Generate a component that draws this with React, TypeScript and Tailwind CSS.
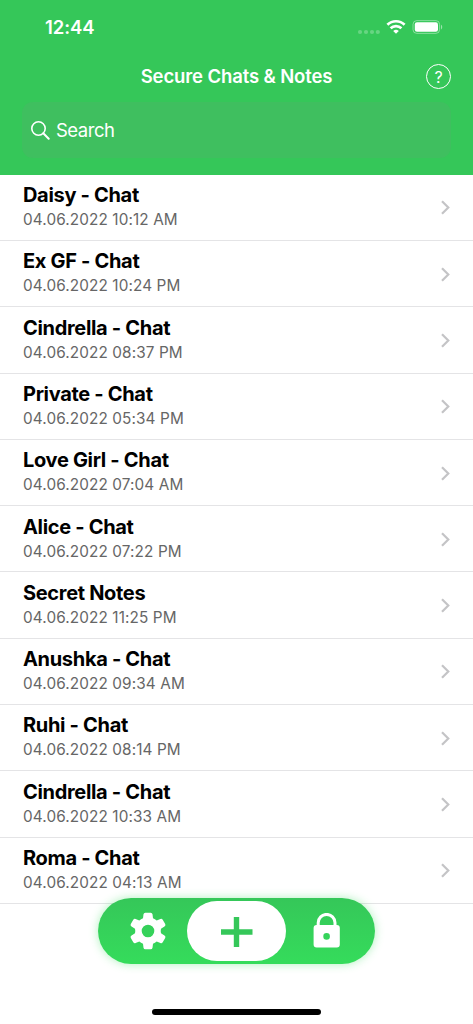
interface ChatEntry {
  title: string
  date: string
}

const chats: ChatEntry[] = [
  { title: "Daisy - Chat", date: "04.06.2022 10:12 AM" },
  { title: "Ex GF - Chat", date: "04.06.2022 10:24 PM" },
  { title: "Cindrella - Chat", date: "04.06.2022 08:37 PM" },
  { title: "Private - Chat", date: "04.06.2022 05:34 PM" },
  { title: "Love Girl - Chat", date: "04.06.2022 07:04 AM" },
  { title: "Alice - Chat", date: "04.06.2022 07:22 PM" },
  { title: "Secret Notes", date: "04.06.2022 11:25 PM" },
  { title: "Anushka - Chat", date: "04.06.2022 09:34 AM" },
  { title: "Ruhi - Chat", date: "04.06.2022 08:14 PM" },
  { title: "Cindrella - Chat", date: "04.06.2022 10:33 AM" },
  { title: "Roma - Chat", date: "04.06.2022 04:13 AM" },
]

function StatusIcons() {
  return (
    <svg width="86" height="16" viewBox="0 0 86 16" fill="none">
      <g fill="#fff" fillOpacity="0.25">
        <circle cx="3" cy="13" r="2.1" />
        <circle cx="9" cy="13" r="2.1" />
        <circle cx="15" cy="13" r="2.1" />
        <circle cx="20.8" cy="13" r="2.1" />
      </g>
      <g stroke="#fff" strokeWidth="2.7">
        <path d="M30.4 5.8a12.2 12.2 0 0 1 17.2 0" />
        <path d="M33.6 9.3a7.8 7.8 0 0 1 10.8 0" />
      </g>
      <path d="M39 14.8l-2.8-2.8a4 4 0 0 1 5.6 0z" fill="#fff" />
      <rect x="56" y="1.6" width="26.6" height="12.8" rx="3.8" stroke="#fff" strokeOpacity="0.4" />
      <rect x="57.8" y="3.2" width="23.2" height="9.6" rx="2.2" fill="#fff" />
      <path d="M84 5.8c1.6.6 1.6 4 0 4.6z" fill="#fff" fillOpacity="0.5" />
    </svg>
  )
}

function GearIcon() {
  return (
    <svg width="36" height="38" viewBox="-18 -19 36 38" fill="#fff">
      <path
        fillRule="evenodd"
        d="M-2.7-18.2H2.7Q4.2-18.2 4.5-16.7L5-12.7Q7-11.9 8.7-10.5L12.4-12Q13.8-12.6 14.7-11.3L17.2-7Q17.9-5.7 16.8-4.8L13-2.3Q12.4 0 13 2.3L16.8 4.8Q17.9 5.7 17.2 7L14.7 11.3Q13.8 12.6 12.4 12L8.7 10.5Q7 11.9 5 12.7L4.5 16.7Q4.2 18.2 2.7 18.2H-2.7Q-4.2 18.2-4.5 16.7L-5 12.7Q-7 11.9-8.7 10.5L-12.4 12Q-13.8 12.6-14.7 11.3L-17.2 7Q-17.9 5.7-16.8 4.8L-13 2.3Q-12.4 0-13-2.3L-16.8-4.8Q-17.9-5.7-17.2-7L-14.7-11.3Q-13.8-12.6-12.4-12L-8.7-10.5Q-7-11.9-5-12.7L-4.5-16.7Q-4.2-18.2-2.7-18.2ZM0-6.3A6.3 6.3 0 1 0 0 6.3A6.3 6.3 0 1 0 0-6.3Z"
      />
    </svg>
  )
}

function LockIcon() {
  return (
    <svg width="28" height="36" viewBox="0 0 28 36" fill="none">
      <path d="M5.2 13V9.8a8.4 8.4 0 0 1 16.8 0V13" stroke="#fff" strokeWidth="3" />
      <path
        fillRule="evenodd"
        fill="#fff"
        d="M3.6 12H23.8Q26.8 12 26.8 15V31.6Q26.8 34.6 23.8 34.6H3.6Q.6 34.6.6 31.6V15Q.6 12 3.6 12ZM13.6 20.1A3.3 3.3 0 1 0 13.6 26.7A3.3 3.3 0 1 0 13.6 20.1Z"
      />
    </svg>
  )
}

function ChatRow({ title, date }: ChatEntry) {
  return (
    <li className="flex h-[66.3px] items-center justify-between border-b border-[#e4e4e6] pr-[22px] pl-[23px]">
      <div className="pt-[1px]">
        <h2 className="text-[20px] leading-[25px] font-[650] tracking-[-0.32px] text-black">{title}</h2>
        <p className="text-[15.3px] leading-[24.5px] tracking-[0.12px] text-[#666]">{date}</p>
      </div>
      <svg width="10" height="16" viewBox="0 0 10 16" fill="none" stroke="#c4c4c6" strokeWidth="2.2">
        <path d="M1 2.2L7.3 8.5L1 14.8" />
      </svg>
    </li>
  )
}

export default function App() {
  return (
    <div className="relative flex h-[1024px] w-[473px] flex-col overflow-hidden bg-white font-['Inter','Liberation_Sans',sans-serif]">
      <header className="h-[174.7px] shrink-0 bg-[#35c759] text-white">
        {/* Status bar */}
        <div className="flex h-[54px] items-center justify-between pr-[30px] pl-[45px]">
          <span className="pt-[1px] text-[18.5px] font-semibold tracking-[-0.1px]">12:44</span>
          <StatusIcons />
        </div>

        {/* Title */}
        <div className="grid h-[48px] grid-cols-[1fr_auto_1fr] items-center px-[22px] pb-[3px]">
          <h1 className="col-start-2 text-[18.5px] font-semibold tracking-[-0.12px]">Secure Chats &amp; Notes</h1>
          <button className="flex size-[25px] items-center justify-center justify-self-end rounded-full border border-white text-[16px]">
            ?
          </button>
        </div>

        {/* Search */}
        <div className="mx-[22px] flex h-[56px] items-center rounded-[11px] bg-[#3fbf5f] pl-[9px]">
          <svg width="19" height="19" viewBox="0 0 19 19" fill="none" stroke="#fff" strokeWidth="1.6">
            <circle cx="7.5" cy="7.5" r="6.7" />
            <path d="M12.3 12.3l5.4 5.4" strokeWidth="2" strokeLinecap="round" />
          </svg>
          <span className="pt-[2px] pl-[6px] text-[18.5px] tracking-[-0.5px]">Search</span>
        </div>
      </header>

      <ul>
        {chats.map((chat, i) => (
          <ChatRow key={i} title={chat.title} date={chat.date} />
        ))}
      </ul>

      {/* Floating toolbar */}
      <nav className="absolute top-[898px] left-[98px] flex h-[66px] w-[277px] items-center rounded-full bg-linear-to-b from-[#35c759] to-[#35dc5b] shadow-[0_0_10px_rgba(53,220,91,0.4)]">
        <button className="flex w-[89px] justify-center pl-[10px]">
          <GearIcon />
        </button>
        <button className="flex h-[60px] w-[99px] items-center justify-center rounded-full bg-white">
          <svg width="32" height="32" viewBox="0 0 32 32" stroke="#35c759" strokeWidth="5.4">
            <path d="M15.5 2v30M0 17h31.5" />
          </svg>
        </button>
        <button className="flex w-[89px] justify-center pr-[8px]">
          <LockIcon />
        </button>
      </nav>

      {/* Home indicator */}
      <div className="absolute top-[1009px] left-[152px] h-[6px] w-[169px] rounded-full bg-black" />
    </div>
  )
}
